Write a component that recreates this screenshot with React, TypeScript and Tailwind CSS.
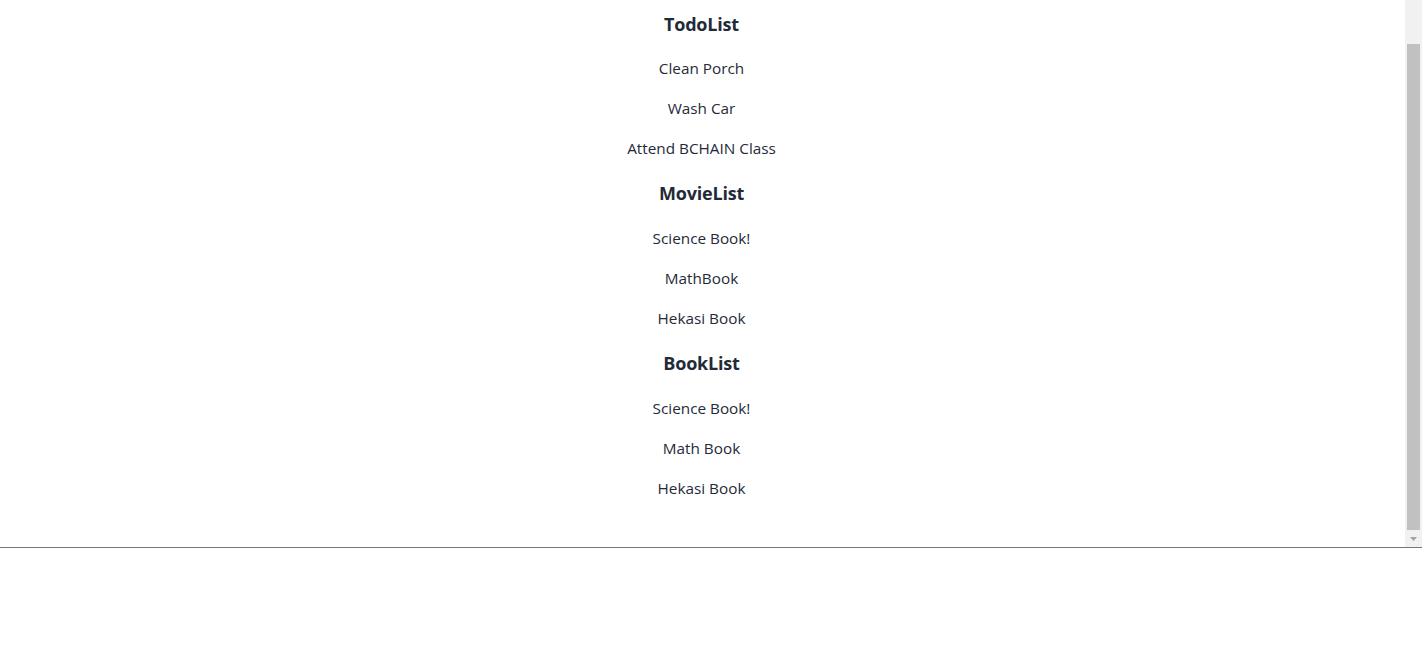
import React from 'react';

const lists = [
  { title: 'TodoList', items: ['Clean Porch', 'Wash Car', 'Attend BCHAIN Class'] },
  { title: 'MovieList', items: ['Science Book!', 'MathBook', 'Hekasi Book'] },
  { title: 'BookList', items: ['Science Book!', 'Math Book', 'Hekasi Book'] },
];

export default function App() {
  return (
    <div className="w-[1422px] h-[648px] bg-white font-['Open_Sans',sans-serif] text-[#1f2b38]">
      <div className="flex h-[548px] border-b border-[#767676]">
        <div className="flex-1 flex flex-col items-center pr-[2px]">
          {lists.map((list, i) => (
            <div key={list.title} className="flex flex-col items-center">
              <h2
                className={`${i === 0 ? 'h-12' : 'h-[50px]'} flex items-center text-[18px] font-bold tracking-[-0.2px]`}
              >
                {list.title}
              </h2>
              {list.items.map((item, j) => (
                <div key={j} className="h-10 flex items-center pt-[1px] text-[15.3px]">
                  {item}
                </div>
              ))}
            </div>
          ))}
        </div>
        <div className="w-[17px] bg-[#f1f1f1] flex flex-col items-center">
          <div className="h-[44px]" />
          <div className="w-[13px] flex-1 bg-[#c1c1c1]" />
          <div className="h-[17px] flex items-center justify-center">
            <svg width="7" height="4" viewBox="0 0 7 4">
              <path d="M0 0h7L3.5 4z" fill="#a3a3a3" />
            </svg>
          </div>
        </div>
      </div>
    </div>
  );
}
